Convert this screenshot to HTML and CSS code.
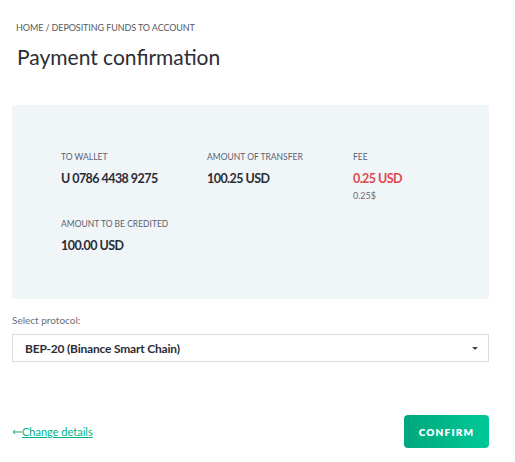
FILE: index.html
```html
<!DOCTYPE html>
<html>
<head>
<meta charset="utf-8">
<link rel="stylesheet" href="styles.css">
</head>
<body>
<div class="page">
  <div class="crumbs">HOME / DEPOSITING FUNDS TO ACCOUNT</div>
  <h1 class="title">Payment confirmation</h1>
  <div class="panel">
    <div class="grid">
      <div class="cell">
        <div class="label">TO WALLET</div>
        <div class="value">U 0786 4438 9275</div>
      </div>
      <div class="cell">
        <div class="label">AMOUNT OF TRANSFER</div>
        <div class="value">100.25 USD</div>
      </div>
      <div class="cell">
        <div class="label">FEE</div>
        <div class="value red">0.25 USD</div>
        <div class="sub">0.25$</div>
      </div>
      <div class="cell">
        <div class="label">AMOUNT TO BE CREDITED</div>
        <div class="value">100.00 USD</div>
      </div>
    </div>
  </div>
  <div class="field-label">Select protocol:</div>
  <div class="select">
    <span>BEP-20 (Binance Smart Chain)</span>
    <span class="caret"></span>
  </div>
  <div class="actions">
    <a class="back" href="#"><svg class="arrow" width="10" height="6" viewBox="0 0 10 6"><path d="M10 3H1.2M3.2 1L1 3l2.2 2" fill="none" stroke="#1aa67e" stroke-width="1"/></svg><span class="link">Change details</span></a>
    <button class="confirm">CONFIRM</button>
  </div>
</div>
</body>
</html>
```

FILE: styles.css
```css
* { box-sizing: border-box; }
body {
  margin: 0;
  background: #fff;
  font-family: Lato, "Noto Sans", sans-serif;
  color: #2b2d36;
}
.page {
  padding: 0 26px 0 12px;
}
.crumbs {
  padding: 22px 0 0 4px;
  font-size: 9px;
  line-height: 12px;
  color: #555a60;
  letter-spacing: -0.1px;
}
.title {
  margin: 0;
  padding: 9px 0 0 5px;
  font-size: 21px;
  line-height: 28px;
  font-weight: 400;
  color: #2b2d36;
}
.panel {
  margin-top: 34px;
  height: 194px;
  background: #f0f5f8;
  border-radius: 3px;
  padding: 46px 0 0 49px;
}
.grid {
  display: grid;
  grid-template-columns: 146px 146px 146px;
  row-gap: 16px;
}
.label {
  font-size: 8.5px;
  line-height: 12px;
  color: #5b6170;
}
.value {
  margin-top: 8px;
  font-size: 12.5px;
  line-height: 15px;
  font-weight: 700;
  letter-spacing: -0.55px;
  color: #2b2d36;
}
.value.red { color: #e0464d; }
.sub {
  margin-top: 4px;
  font-size: 9px;
  line-height: 12px;
  color: #666a70;
}
.field-label {
  margin-top: 14px;
  font-size: 10px;
  line-height: 14px;
  color: #6b6e74;
}
.select {
  margin-top: 7px;
  height: 28px;
  border: 1px solid #d5dde4;
  display: flex;
  align-items: center;
  justify-content: space-between;
  padding: 0 10px 0 12px;
  font-size: 12px;
  font-weight: 700;
  letter-spacing: -0.2px;
  color: #2b2d36;
}
.caret {
  width: 0; height: 0;
  border-left: 3px solid transparent;
  border-right: 3px solid transparent;
  border-top: 3px solid #444;
}
.actions {
  margin-top: 53px;
  display: flex;
  justify-content: space-between;
  align-items: center;
}
.back {
  display: flex;
  align-items: center;
  font-size: 11px;
  color: #00b386;
  text-decoration: none;
}
.arrow { display: block; }
.link { text-decoration: underline; color: #00b386; }
.confirm {
  width: 85px;
  height: 33px;
  border: none;
  border-radius: 4px;
  background: linear-gradient(90deg, #00a87c, #00c898);
  color: #fff;
  font-family: Lato, "Noto Sans", sans-serif;
  font-weight: 800;
  font-size: 10px;
  letter-spacing: 1.2px;
}
```
